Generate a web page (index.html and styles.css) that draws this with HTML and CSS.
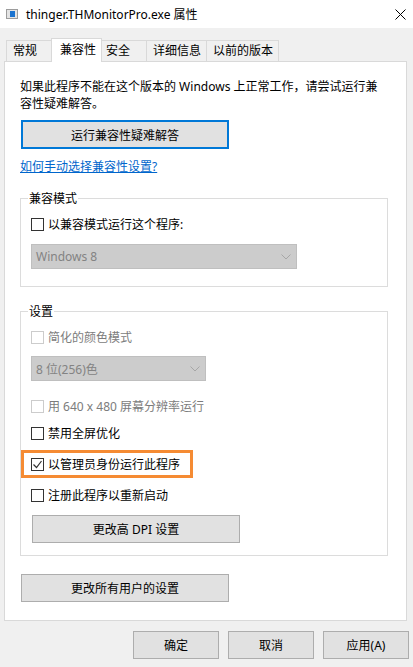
FILE: index.html
```html
<!DOCTYPE html>
<html lang="zh-CN">
<head>
    <meta charset="UTF-8">
    <meta name="viewport" content="width=device-width, initial-scale=1.0">
    <title>thinger.THMonitorPro.exe 属性</title>
    <link rel="stylesheet" href="styles.css">
</head>
<body>
    <div class="titlebar">
        <svg class="app-icon" width="12" height="10" viewBox="0 0 12 10">
            <rect x="0.5" y="0.5" width="11" height="9" fill="#e4e4e4" stroke="#9c9c9c"/>
            <rect x="4" y="2" width="5" height="6" fill="#1a73d0"/>
        </svg>
        <span class="title">thinger.THMonitorPro.exe 属性</span>
        <svg class="close" width="11" height="11" viewBox="0 0 11 11">
            <path d="M0.5 0.5 L10.5 10.5 M10.5 0.5 L0.5 10.5" stroke="#000" stroke-width="1" fill="none"/>
        </svg>
    </div>

    <div class="dialog">
        <div class="tabs">
            <div class="tab">常规</div>
            <div class="tab active">兼容性</div>
            <div class="tab">安全</div>
            <div class="tab">详细信息</div>
            <div class="tab">以前的版本</div>
        </div>

        <div class="panel">
            <p class="intro">如果此程序不能在这个版本的 Windows 上正常工作，请尝试运行兼<br>容性疑难解答。</p>
            <button class="btn btn-wide btn-focus">运行兼容性疑难解答</button>
            <a class="link" href="#">如何手动选择兼容性设置?</a>

            <fieldset class="group group-mode">
                <legend>兼容模式</legend>
                <label class="check"><span class="box"></span>以兼容模式运行这个程序:</label>
                <div class="select select-os">
                    <span>Windows 8</span>
                    <svg width="10" height="6" viewBox="0 0 10 6"><path d="M0.5 0.5 L5 5 L9.5 0.5" stroke="#a6a6a6" fill="none"/></svg>
                </div>
            </fieldset>

            <fieldset class="group group-settings">
                <legend>设置</legend>
                <label class="check disabled"><span class="box"></span>简化的颜色模式</label>
                <div class="select select-color">
                    <span>8 位(256)色</span>
                    <svg width="10" height="6" viewBox="0 0 10 6"><path d="M0.5 0.5 L5 5 L9.5 0.5" stroke="#a6a6a6" fill="none"/></svg>
                </div>
                <label class="check disabled row-640"><span class="box"></span>用 640 x 480 屏幕分辨率运行</label>
                <label class="check row-gap"><span class="box"></span>禁用全屏优化</label>
                <div class="highlight">
                    <label class="check"><span class="box">
                        <svg width="11" height="11" viewBox="0 0 11 11"><path d="M1.5 5.5 L4.5 8.5 L9.5 2" stroke="#333" stroke-width="1.2" fill="none"/></svg>
                    </span>以管理员身份运行此程序</label>
                </div>
                <label class="check row-restart"><span class="box"></span>注册此程序以重新启动</label>
                <button class="btn btn-wide btn-dpi">更改高 DPI 设置</button>
            </fieldset>

            <button class="btn btn-wide btn-all">更改所有用户的设置</button>
        </div>

        <div class="actions">
            <button class="btn btn-action">确定</button>
            <button class="btn btn-action">取消</button>
            <button class="btn btn-action">应用(A)</button>
        </div>
    </div>
</body>
</html>
```

FILE: styles.css
```css
body {
    margin: 0;
    padding: 0;
    font-family: "Noto Sans", "Noto Sans CJK SC", sans-serif;
    font-size: 12px;
    color: #000;
    background-color: #f0f0f0;
}

.titlebar {
    display: flex;
    align-items: center;
    height: 28px;
    background: #fff;
    padding: 0 7px 0 6px;
}

.app-icon {
    margin-right: 8px;
}

.title {
    flex: 1;
    line-height: 17px;
}

.dialog {
    padding-top: 10px;
}

.tabs {
    display: flex;
    align-items: flex-end;
    padding-left: 7px;
}

.tab {
    box-sizing: border-box;
    height: 21px;
    min-width: 48px;
    padding: 0 5px 0 6px;
    line-height: 20px;
    border: 1px solid #d9d9d9;
    border-bottom: none;
    margin-left: -1px;
    background: #f0f0f0;
    white-space: nowrap;
}

.tab.active {
    height: 24px;
    min-width: 51px;
    line-height: 21px;
    padding-left: 8px;
    margin: 0 -2px -1px -3px;
    background: #fff;
    position: relative;
    z-index: 1;
}

.panel {
    margin: 0 6px 0 4px;
    padding: 16px 15px 18px 15px;
    background: #fff;
    border: 1px solid #d9d9d9;
}

.intro {
    margin: 0;
    line-height: 17px;
}

.btn {
    display: block;
    box-sizing: border-box;
    height: 28px;
    padding: 0;
    font-family: inherit;
    font-size: 12px;
    color: #000;
    background: #e1e1e1;
    border: 1px solid #adadad;
    text-align: center;
}

.btn-wide {
    width: 208px;
    margin-left: 1px;
}

.btn-focus {
    height: 29px;
    margin-top: 8px;
    border: 2px solid #0078d7;
}

.link {
    display: block;
    margin-top: 9px;
    line-height: 17px;
    color: #0066cc;
    text-decoration: underline;
    width: fit-content;
}

.group {
    margin: 0 3px 0 0;
    padding: 9px 10px 17px 10px;
    border: 1px solid #dcdcdc;
    min-width: 0;
}

.group legend {
    padding: 0 1px;
    margin-left: -3px;
    line-height: 17px;
}

.group-mode {
    margin-top: 15px;
}

.group-settings {
    margin-top: 16px;
    padding-bottom: 12px;
}

.check {
    display: flex;
    align-items: center;
    height: 17px;
    line-height: 17px;
    white-space: nowrap;
}

.check .box {
    box-sizing: border-box;
    display: flex;
    align-items: center;
    justify-content: center;
    width: 13px;
    height: 13px;
    margin-right: 4px;
    border: 1px solid #333;
    background: #fff;
}

.check.disabled {
    color: #7c7c7c;
}

.check.disabled .box {
    border-color: #cccccc;
}

.select {
    box-sizing: border-box;
    display: flex;
    align-items: center;
    justify-content: space-between;
    height: 25px;
    padding: 0 5px 0 4px;
    background: #cccccc;
    border: 1px solid #bfbfbf;
    color: #838383;
}

.select-os {
    width: 266px;
    margin-top: 11px;
}

.select-color {
    width: 175px;
    margin-top: 10px;
}

.row-640 {
    margin-top: 17px;
}

.row-gap {
    margin-top: 10px;
}

.highlight {
    width: fit-content;
    margin: 8px 0 0 -10px;
    padding: 3px 10px 2px 7px;
    border: 3px solid #f58b33;
}

.row-restart {
    margin-top: 9px;
}

.btn-dpi {
    margin-top: 11px;
}

.btn-all {
    margin-top: 18px;
}

.actions {
    display: flex;
    justify-content: flex-end;
    gap: 9px;
    margin-top: 10px;
    padding-right: 4px;
}

.btn-action {
    width: 86px;
}
```
